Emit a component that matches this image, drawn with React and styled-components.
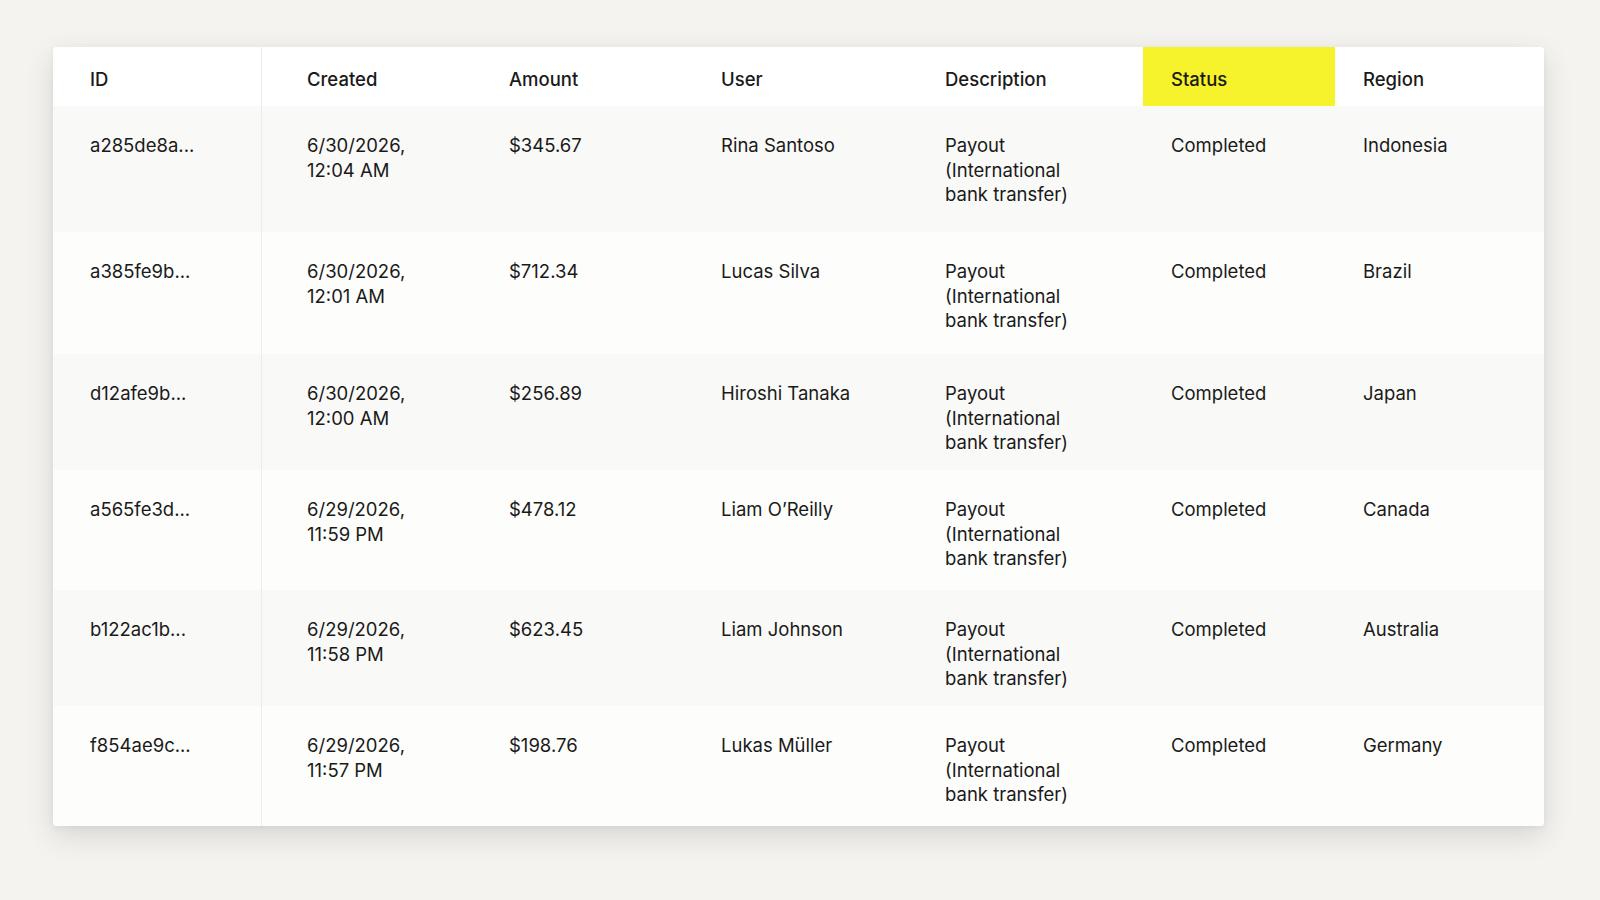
import React from 'react';
import styled, { createGlobalStyle } from 'styled-components';

const Global = createGlobalStyle`
  body {
    margin: 0;
    background: #f4f3f0;
    font-family: Inter, "Noto Sans", sans-serif;
    color: #1a1a1a;
  }
`;

const Page = styled.div`
  width: 1600px;
  height: 900px;
  padding: 47px 56px 0 53px;
  box-sizing: border-box;
`;

const Card = styled.div`
  background: #fff;
  border-radius: 4px;
  box-shadow: 0 10px 30px rgba(0, 0, 0, 0.12), 0 2px 6px rgba(0, 0, 0, 0.05);
  overflow: hidden;
  display: grid;
  grid-template-columns: 209px 219px 212px 224px 226px 192px 209px;
`;

const HeadCell = styled.div`
  height: 59px;
  box-sizing: border-box;
  display: flex;
  align-items: center;
  padding: 5px 0 0 ${p => p.$pad}px;
  font-size: 18.5px;
  font-weight: 500;
  background: ${p => (p.$hl ? '#f6f22b' : '#fff')};
  border-right: ${p => (p.$div ? '1px solid #ececea' : 'none')};
`;

const Cell = styled.div`
  height: ${p => p.$h}px;
  box-sizing: border-box;
  padding: 27px 10px 0 ${p => p.$pad}px;
  font-size: 18.5px;
  line-height: 24.5px;
  background: ${p => (p.$alt ? '#f9f9f7' : '#fdfdfc')};
  border-right: ${p => (p.$div ? '1px solid #ececea' : 'none')};
`;

const cols = ['ID', 'Created', 'Amount', 'User', 'Description', 'Status', 'Region'];
const pads = [37, 45, 28, 28, 28, 28, 28];

const rows = [
  ['a285de8a...', '6/30/2026,\n12:04 AM', '$345.67', 'Rina Santoso', 'Indonesia', 126],
  ['a385fe9b...', '6/30/2026,\n12:01 AM', '$712.34', 'Lucas Silva', 'Brazil', 122],
  ['d12afe9b...', '6/30/2026,\n12:00 AM', '$256.89', 'Hiroshi Tanaka', 'Japan', 116],
  ['a565fe3d...', '6/29/2026,\n11:59 PM', '$478.12', 'Liam O’Reilly', 'Canada', 120],
  ['b122ac1b...', '6/29/2026,\n11:58 PM', '$623.45', 'Liam Johnson', 'Australia', 116],
  ['f854ae9c...', '6/29/2026,\n11:57 PM', '$198.76', 'Lukas Müller', 'Germany', 120],
];

const Lines = ({ text }) =>
  text.split('\n').map((l, i) => <div key={i}>{l}</div>);

export default function App() {
  return (
    <Page>
      <Global />
      <Card>
        {cols.map((c, i) => (
          <HeadCell key={c} $pad={pads[i]} $hl={c === 'Status'} $div={i === 0}>
            {c}
          </HeadCell>
        ))}
        {rows.map((r, ri) => {
          const vals = [r[0], r[1], r[2], r[3], 'Payout\n(International\nbank transfer)', 'Completed', r[4]];
          return vals.map((v, ci) => (
            <Cell key={ri + '-' + ci} $h={r[5]} $pad={pads[ci]} $alt={ri % 2 === 0} $div={ci === 0}>
              <Lines text={v} />
            </Cell>
          ));
        })}
      </Card>
    </Page>
  );
}
